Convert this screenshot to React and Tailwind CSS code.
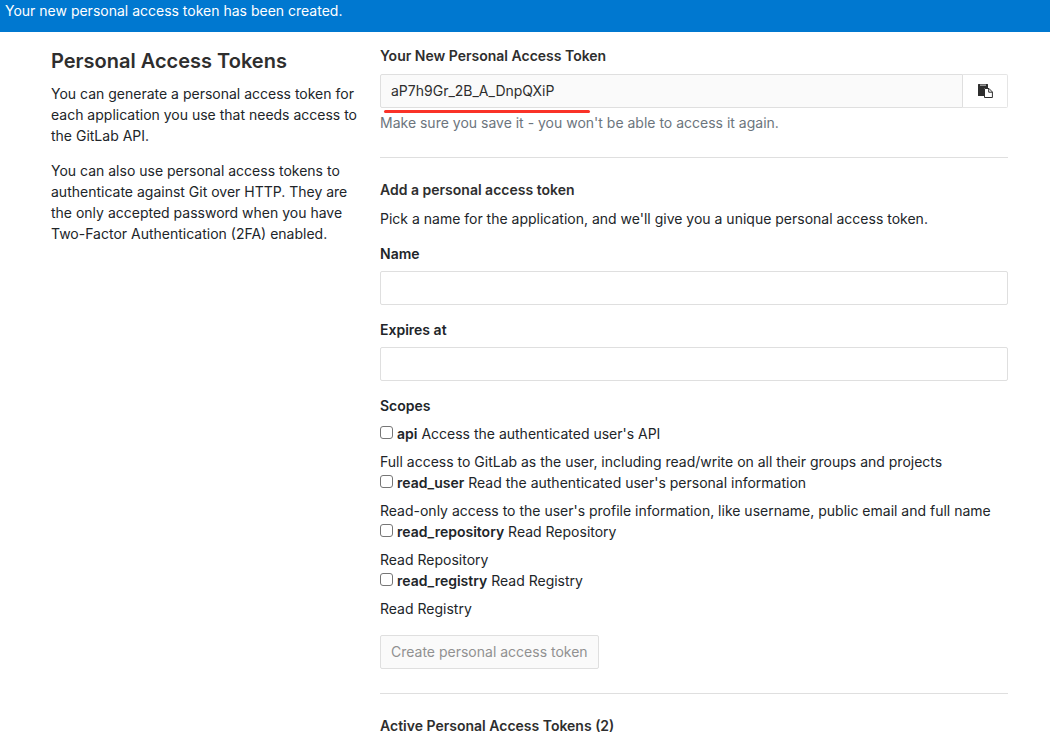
import React, { useState } from "react";

const scopes = [
  {
    name: "api",
    title: "Access the authenticated user's API",
    description:
      "Full access to GitLab as the user, including read/write on all their groups and projects",
  },
  {
    name: "read_user",
    title: "Read the authenticated user's personal information",
    description:
      "Read-only access to the user's profile information, like username, public email and full name",
  },
  { name: "read_repository", title: "Read Repository", description: "Read Repository" },
  { name: "read_registry", title: "Read Registry", description: "Read Registry" },
];

function ClipboardIcon() {
  return (
    <svg width="16" height="16" viewBox="0 0 16 16" aria-hidden="true">
      <path d="M1.5 1h9a.5.5 0 0 1 .5.5V5H7v8H1.5a.5.5 0 0 1-.5-.5v-11a.5.5 0 0 1 .5-.5z" fill="#2e2e2e" />
      <path d="M3 1.7h6v.8H3z" fill="#fff" />
      <path d="M7.5 5.5H12L15.4 9v5.5H7.5z" fill="#fff" stroke="#2e2e2e" strokeLinejoin="round" />
      <path d="M11.7 5.6v3.6h3.6" fill="none" stroke="#2e2e2e" />
    </svg>
  );
}

function TextField({ id, label }) {
  return (
    <div className="mb-[14px]">
      <label htmlFor={id} className="mb-[7px] block font-semibold">
        {label}
      </label>
      <input
        id={id}
        type="text"
        className="block h-[34px] w-full rounded-xs border border-[#dfdfdf] bg-white px-[10px] outline-none focus:border-[#80bdff]"
      />
    </div>
  );
}

function Scope({ name, title, description }) {
  return (
    <div>
      <div className="mb-[7px] flex items-center">
        <input
          id={name}
          type="checkbox"
          className="mr-1 mb-[3px] h-[13px] w-[13px] shrink-0 appearance-none rounded-[3px] border border-[#767676] bg-white checked:bg-[#0075ff]"
        />
        <label htmlFor={name}>
          <span className="font-semibold">{name}</span> {title}
        </label>
      </div>
      <p>{description}</p>
    </div>
  );
}

export default function App() {
  const [token] = useState("aP7h9Gr_2B_A_DnpQXiP");

  return (
    <div className="bg-white font-['Inter','Noto_Sans',sans-serif] text-[14px] leading-[21px] text-[#212529]">
      <div role="status" className="bg-[#0078d0] px-[5px] pb-[11px] text-white">
        Your new personal access token has been created.
      </div>

      <main className="grid grid-cols-3 gap-[30px] pr-[42px] pl-[51px]">
        <aside className="-mr-3 pt-[17px]">
          <h1 className="mb-[10px] text-[20px] leading-[24px] font-semibold text-[#2e2e2e]">
            Personal Access Tokens
          </h1>
          <p className="mb-[14px]">
            You can generate a personal access token for each application you use that needs access to
            the GitLab API.
          </p>
          <p>
            You can also use personal access tokens to authenticate against Git over HTTP. They are the
            only accepted password when you have Two-Factor Authentication (2FA) enabled.
          </p>
        </aside>

        <div className="col-span-2 pt-[13px]">
          <section>
            <h2 className="mb-2 font-semibold text-[#2e2e2e]">
              <label htmlFor="created-token">Your New Personal Access Token</label>
            </h2>
            <div className="relative flex h-[34px]">
              <input
                id="created-token"
                type="text"
                readOnly
                value={token}
                className="min-w-0 flex-1 rounded-l-xs border border-[#dfdfdf] bg-[#fafafa] px-[10px] pb-[2px] text-[#2e2e2e] outline-none"
              />
              <button
                type="button"
                aria-label="Copy personal access token to clipboard"
                onClick={() => navigator.clipboard?.writeText(token)}
                className="flex w-[45px] items-center justify-center rounded-r-xs border border-l-0 border-[#e5e5e5] bg-white"
              >
                <ClipboardIcon />
              </button>
              <span className="absolute top-[36px] left-1 h-[3px] w-[206px] rounded-full bg-[#fa3228]" />
            </div>
            <p className="mt-1 text-[#6c757d]">
              Make sure you save it - you won't be able to access it again.
            </p>
          </section>

          <hr className="mt-6 mb-[21px] border-[#dfdfdf]" />

          <form onSubmit={(event) => event.preventDefault()}>
            <h2 className="mb-2 font-semibold text-[#2e2e2e]">Add a personal access token</h2>
            <p className="mb-[14px]">
              Pick a name for the application, and we'll give you a unique personal access token.
            </p>
            <TextField id="token-name" label="Name" />
            <TextField id="token-expiry" label="Expires at" />
            <fieldset>
              <legend className="mb-[7px] font-semibold">Scopes</legend>
              {scopes.map((scope) => (
                <Scope key={scope.name} {...scope} />
              ))}
            </fieldset>
            <button
              type="submit"
              disabled
              className="mt-4 h-[34px] rounded-xs border border-[#dfdfdf] bg-[#fafafa] px-[10px] pb-[2px] text-[#919191]"
            >
              Create personal access token
            </button>
          </form>

          <hr className="mt-6 mb-[21px] border-[#dfdfdf]" />

          <h2 className="font-semibold text-[#2e2e2e]">Active Personal Access Tokens (2)</h2>
        </div>
      </main>
    </div>
  );
}
